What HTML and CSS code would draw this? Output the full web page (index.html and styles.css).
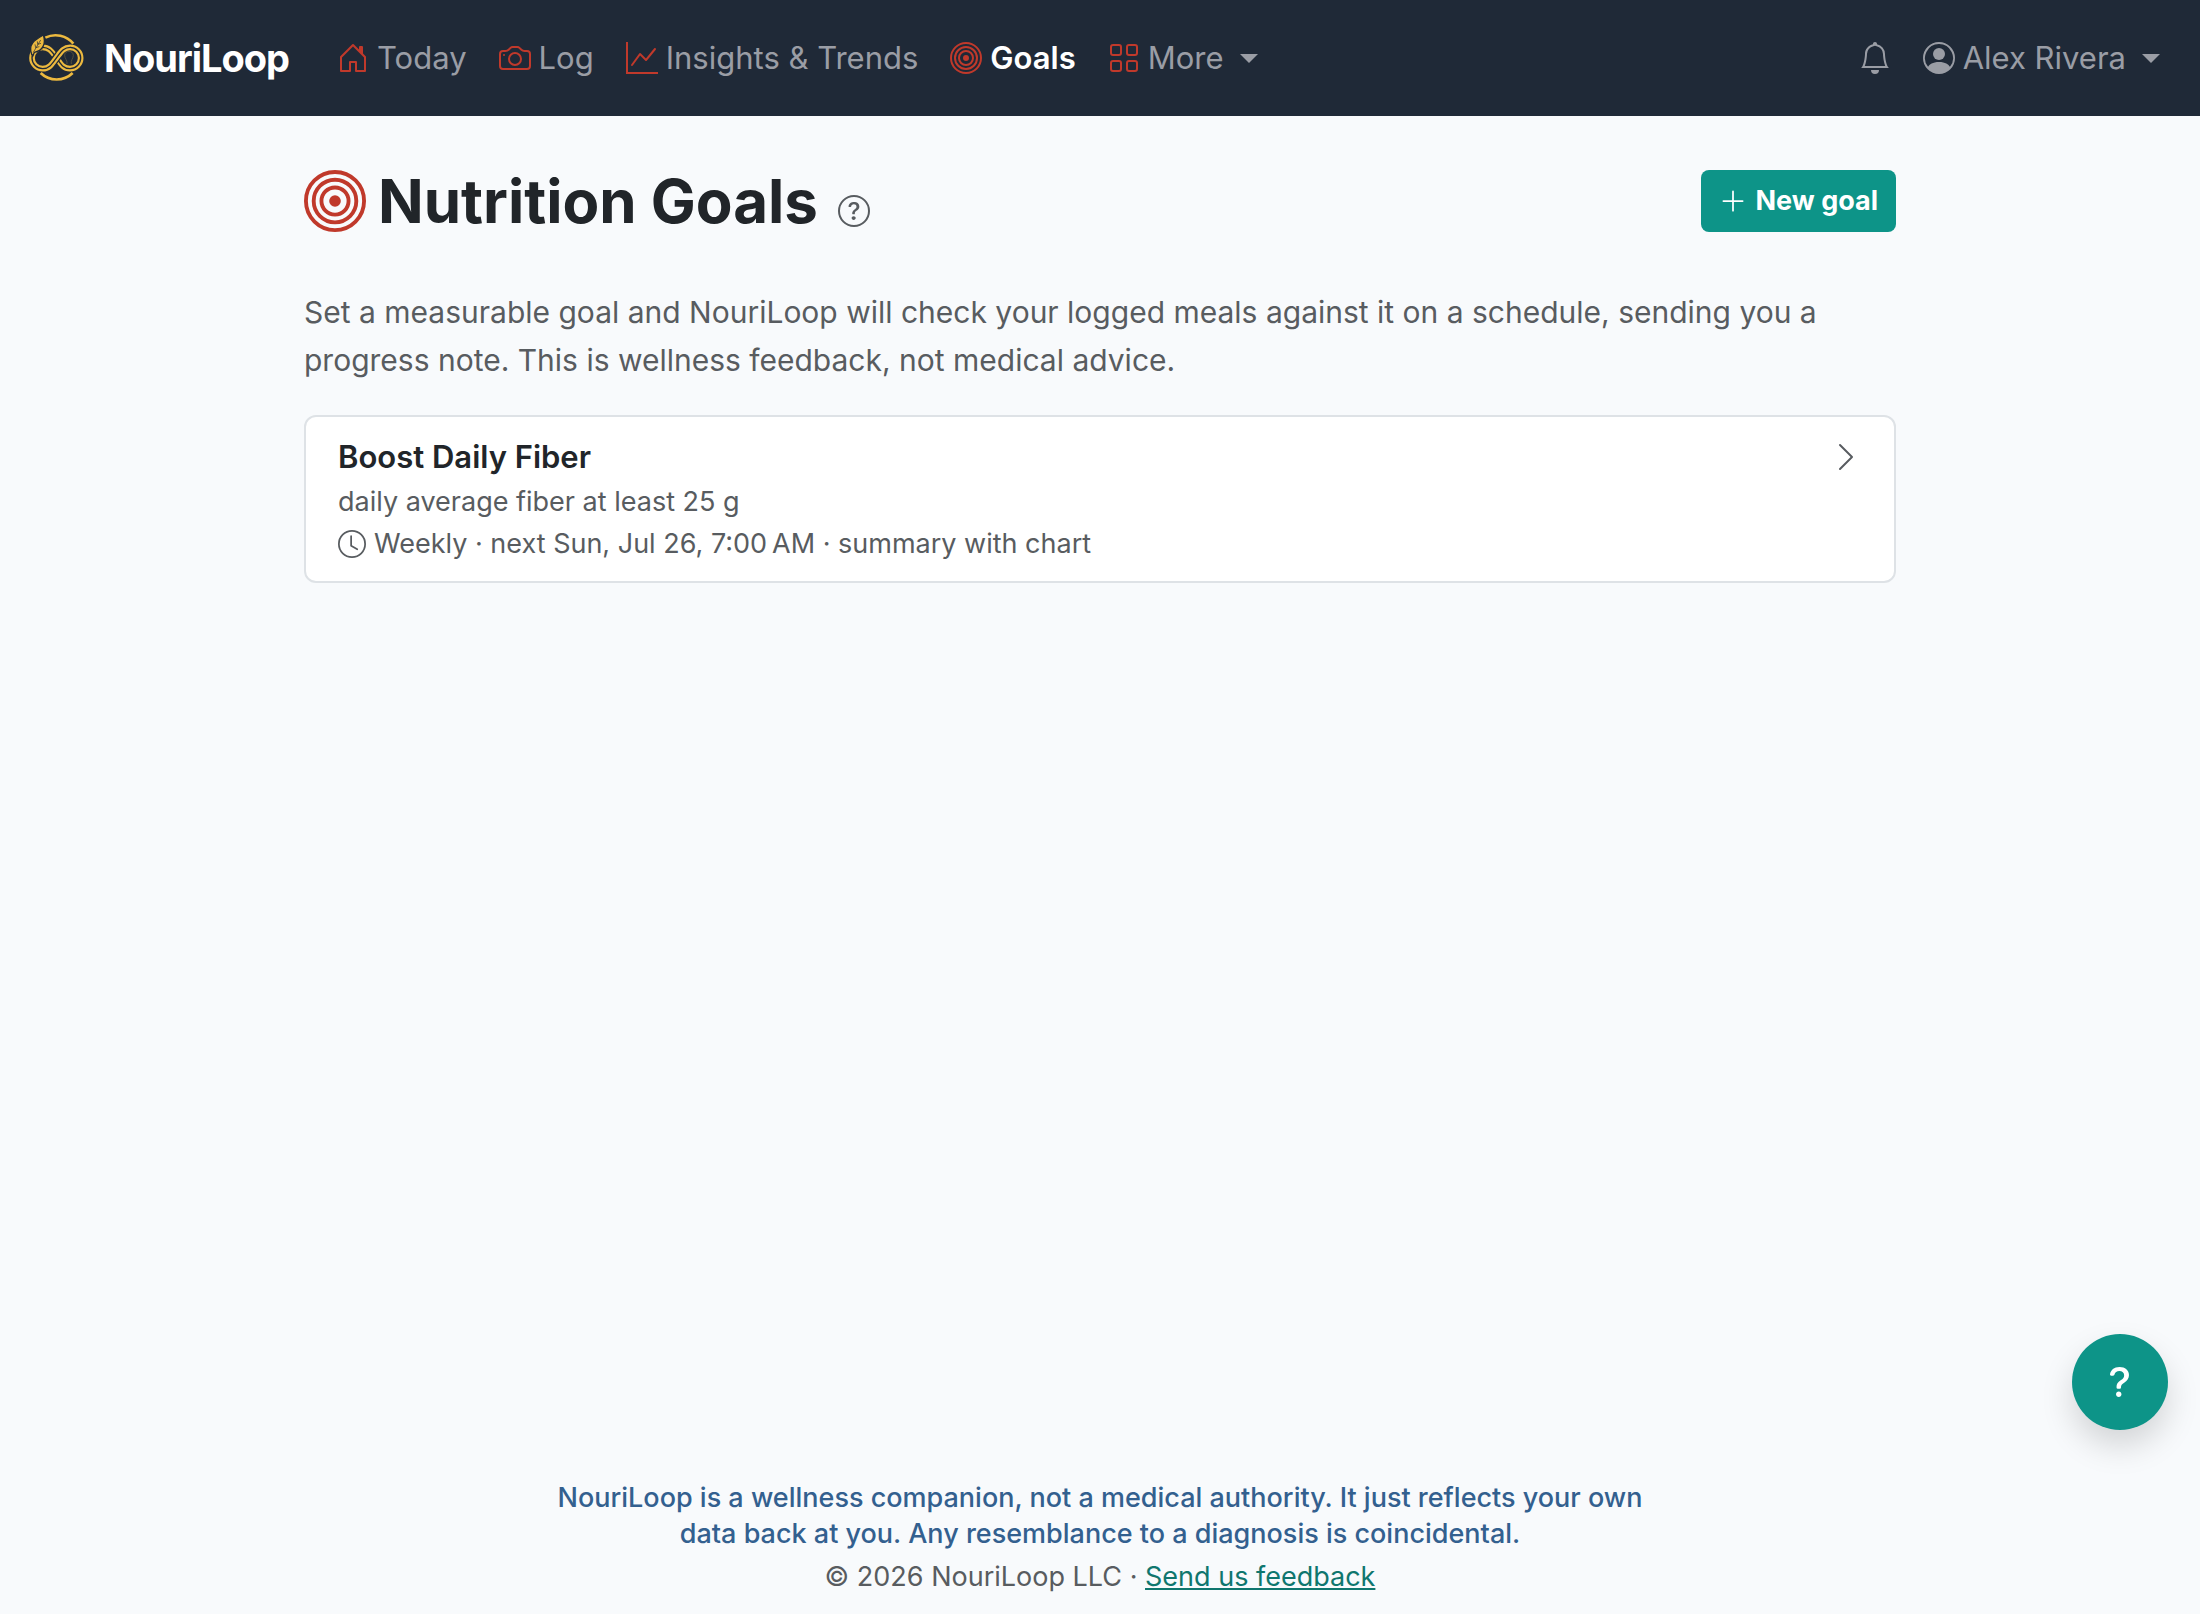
FILE: index.html
```html
<!DOCTYPE html>
<html lang="en">

<head>
    <meta charset="UTF-8">
    <meta name="viewport" content="width=device-width, initial-scale=1">
    <title>Nutrition Goals - NouriLoop</title>
    <link rel="stylesheet" href="styles.css">
</head>
<body>
    <!-- shared symbols -->
    <svg class="sprite" aria-hidden="true">
        <symbol id="bullseye" viewBox="0 0 16 16">
            <g fill="none" stroke="currentColor">
                <circle cx="8" cy="8" r="7.5"/>
                <circle cx="8" cy="8" r="5.5"/>
                <circle cx="8" cy="8" r="3.5"/>
            </g>
            <circle cx="8" cy="8" r="1.5"/>
        </symbol>
    </svg>

    <header class="navbar">
        <a class="brand" href="#">
            <svg class="logo" viewBox="24 31 168 168" fill="none" aria-hidden="true">
                <g class="gold" stroke-width="8">
                    <path d="M76 54A69 69 0 0 1 160 72"/>
                    <path d="M62 160A69 69 0 0 0 158 160"/>
                </g>
                <!-- strand that passes under -->
                <path class="gold" stroke-width="17" d="M68 83C89 83 97 98 110 115C123 134 130 147 150 147A32 32 0 0 0 150 83"/>
                <path class="dark" stroke-width="4" d="M68 83C89 83 97 98 110 115C123 134 130 147 150 147A32 32 0 0 0 150 83"/>
                <!-- strand on top -->
                <path class="dark" stroke-width="25" d="M88 139C97 130 104 121 112 111C118 103 124 96 130 91"/>
                <path class="gold" stroke-width="17" d="M68 83A32 32 0 0 0 68 147C90 147 98 130 112 111C124 95 132 83 150 83"/>
                <path class="dark" stroke-width="4" d="M68 83A32 32 0 0 0 68 147C90 147 98 130 112 111C124 95 132 83 151 83"/>
                <path class="face" stroke-width="2" d="M141 133C143 122 134 117 134 107C134 91 160 91 160 107C160 117 151 122 154 133"/>
                <!-- leaf -->
                <path class="leaf" stroke-width="4" d="M35 104C23 72 46 60 70 46C79 72 68 94 43 98L39 108Z"/>
                <path class="dark" stroke-width="2" d="M40 98L62 61M47 84L45 74M47 84L58 81M53 74L52 65M53 74L63 71"/>
            </svg>
            <span>NouriLoop</span>
        </a>
        <nav class="links">
            <a href="#">
                <svg class="icon red" viewBox="0 0 16 16"><path d="M8.354 1.146a.5.5 0 0 0-.708 0l-6 6A.5.5 0 0 0 1.5 7.5v7a.5.5 0 0 0 .5.5h4.5a.5.5 0 0 0 .5-.5v-4h2v4a.5.5 0 0 0 .5.5H14a.5.5 0 0 0 .5-.5v-7a.5.5 0 0 0-.146-.354L13 5.793V2.5a.5.5 0 0 0-.5-.5h-1a.5.5 0 0 0-.5.5v1.293zM2.5 14V7.707l5.5-5.5 5.5 5.5V14H10v-4a.5.5 0 0 0-.5-.5h-3a.5.5 0 0 0-.5.5v4z"/></svg>
                <span>Today</span>
            </a>
            <a href="#">
                <svg class="icon red" viewBox="0 0 16 16"><path d="M15 12a1 1 0 0 1-1 1H2a1 1 0 0 1-1-1V6a1 1 0 0 1 1-1h1.172a3 3 0 0 0 2.12-.879l.83-.828A1 1 0 0 1 6.827 3h2.344a1 1 0 0 1 .707.293l.828.828A3 3 0 0 0 12.828 5H14a1 1 0 0 1 1 1zM2 4a2 2 0 0 0-2 2v6a2 2 0 0 0 2 2h12a2 2 0 0 0 2-2V6a2 2 0 0 0-2-2h-1.172a2 2 0 0 1-1.414-.586l-.828-.828A2 2 0 0 0 9.172 2H6.828a2 2 0 0 0-1.414.586l-.828.828A2 2 0 0 1 3.172 4z"/><path d="M8 11a2.5 2.5 0 1 1 0-5 2.5 2.5 0 0 1 0 5m0 1a3.5 3.5 0 1 0 0-7 3.5 3.5 0 0 0 0 7M3 6.5a.5.5 0 1 1-1 0 .5.5 0 0 1 1 0"/></svg>
                <span>Log</span>
            </a>
            <a href="#">
                <svg class="icon red" viewBox="0 0 16 16"><path d="M0 0h1v15h15v1H0zm14.817 3.113a.5.5 0 0 1 .07.704l-4.5 5.5a.5.5 0 0 1-.74.037L7.06 6.767l-3.656 5.027a.5.5 0 0 1-.808-.588l4-5.5a.5.5 0 0 1 .758-.06l2.609 2.61 4.15-5.073a.5.5 0 0 1 .704-.07"/></svg>
                <span>Insights &amp; Trends</span>
            </a>
            <a href="#" class="active" aria-current="page">
                <svg class="icon red"><use href="#bullseye"/></svg>
                <span>Goals</span>
            </a>
            <button type="button" aria-haspopup="true">
                <svg class="icon red" viewBox="0 0 16 16" fill="none" stroke="currentColor"><rect x="1.5" y="1.5" width="5" height="5" rx="1"/><rect x="9.5" y="1.5" width="5" height="5" rx="1"/><rect x="1.5" y="9.5" width="5" height="5" rx="1"/><rect x="9.5" y="9.5" width="5" height="5" rx="1"/></svg>
                <span>More</span>
                <i class="caret"></i>
            </button>
        </nav>
        <div class="links account">
            <a href="#" aria-label="Notifications">
                <svg class="icon" viewBox="0 0 16 16"><path d="M8 16a2 2 0 0 0 2-2H6a2 2 0 0 0 2 2M8 1.918l-.797.161A4 4 0 0 0 4 6c0 .628-.134 2.197-.459 3.742-.16.767-.376 1.566-.663 2.258h10.244c-.287-.692-.502-1.49-.663-2.258C12.134 8.197 12 6.628 12 6a4 4 0 0 0-3.203-3.92zM14.22 12c.223.447.481.801.78 1H1c.299-.199.557-.553.78-1C2.68 10.2 3 6.88 3 6c0-2.42 1.72-4.44 4.005-4.901a1 1 0 1 1 1.99 0A5 5 0 0 1 13 6c0 .88.32 4.2 1.22 6"/></svg>
            </a>
            <button type="button" aria-haspopup="true">
                <svg class="icon" viewBox="0 0 16 16"><path d="M11 6a3 3 0 1 1-6 0 3 3 0 0 1 6 0"/><path fill-rule="evenodd" d="M0 8a8 8 0 1 1 16 0A8 8 0 0 1 0 8m8-7a7 7 0 0 0-5.468 11.37C3.242 11.226 4.805 10 8 10s4.757 1.225 5.468 2.37A7 7 0 0 0 8 1"/></svg>
                <span>Alex Rivera</span>
                <i class="caret"></i>
            </button>
        </div>
    </header>

    <main class="container">
        <div class="page-head">
            <h1>
                <svg class="icon-title red"><use href="#bullseye"/></svg>
                <span>Nutrition Goals</span>
            </h1>
            <button type="button" class="hint" aria-label="About goals">
                <svg class="icon" viewBox="0 0 16 16"><circle cx="8" cy="8" r="7.5" fill="none" stroke="currentColor"/><path d="M5.255 5.786a.237.237 0 0 0 .241.247h.825c.138 0 .248-.113.266-.25.09-.656.54-1.134 1.342-1.134.686 0 1.314.343 1.314 1.168 0 .635-.374.927-.965 1.371-.673.489-1.206 1.06-1.168 1.987l.003.217a.25.25 0 0 0 .25.246h.811a.25.25 0 0 0 .25-.25v-.105c0-.718.273-.927 1.01-1.486.609-.463 1.244-.977 1.244-2.056 0-1.511-1.276-2.241-2.673-2.241-1.267 0-2.655.59-2.75 2.286m1.557 5.763c0 .533.425.927 1.01.927.609 0 1.028-.394 1.028-.927 0-.552-.42-.94-1.029-.94-.584 0-1.009.388-1.009.94"/></svg>
            </button>
            <button type="button" class="btn">
                <svg class="icon-sm" viewBox="0 0 16 16"><path d="M8 2a.5.5 0 0 1 .5.5v5h5a.5.5 0 0 1 0 1h-5v5a.5.5 0 0 1-1 0v-5h-5a.5.5 0 0 1 0-1h5v-5A.5.5 0 0 1 8 2"/></svg>
                <span>New goal</span>
            </button>
        </div>
        <p class="lead">Set a measurable goal and NouriLoop will check your logged meals against it on a schedule, sending you a progress note. This is wellness feedback, not medical advice.</p>
        <a class="goal" href="#">
            <div class="goal-body">
                <h2>Boost Daily Fiber</h2>
                <p>daily average fiber at least 25 g</p>
                <p class="schedule">
                    <svg class="icon-sm" viewBox="0 0 16 16"><circle cx="8" cy="8" r="7.5" fill="none" stroke="currentColor"/><path d="M8 3.5a.5.5 0 0 0-1 0V9a.5.5 0 0 0 .252.434l3.5 2a.5.5 0 0 0 .496-.868L8 8.71z"/></svg>
                    <span>Weekly · next Sun, Jul 26, 7:00&#8239;AM · summary with chart</span>
                </p>
            </div>
            <svg class="icon" viewBox="0 0 16 16"><path d="M4.646 1.646a.5.5 0 0 1 .708 0l6 6a.5.5 0 0 1 0 .708l-6 6a.5.5 0 0 1-.708-.708L10.293 8 4.646 2.354a.5.5 0 0 1 0-.708"/></svg>
        </a>
    </main>

    <footer class="footer">
        <p class="note">NouriLoop is a wellness companion, not a medical authority. It just reflects your own data back at you. Any resemblance to a diagnosis is coincidental.</p>
        <p>© 2026 NouriLoop LLC · <a href="#">Send us feedback</a></p>
    </footer>

    <button type="button" class="help" aria-label="Help">
        <svg viewBox="0 0 16 16"><path d="M4.475 5.458c-.284 0-.514-.237-.47-.517C4.28 3.24 5.576 2 7.825 2c2.25 0 3.767 1.36 3.767 3.215 0 1.344-.665 2.288-1.79 2.973-1.1.659-1.414 1.118-1.414 2.01v.03a.5.5 0 0 1-.5.5h-.77a.5.5 0 0 1-.5-.495l-.003-.2c-.043-1.221.477-2.001 1.645-2.712 1.03-.632 1.397-1.135 1.397-2.028 0-.979-.758-1.698-1.926-1.698-1.009 0-1.71.529-1.938 1.402-.066.254-.278.461-.54.461h-.777ZM7.496 14c.622 0 1.095-.474 1.095-1.09 0-.618-.473-1.092-1.095-1.092-.606 0-1.087.474-1.087 1.091S6.89 14 7.496 14"/></svg>
    </button>
</body>
</html>
```

FILE: styles.css
```css
* {
    box-sizing: border-box;
    margin: 0;
    padding: 0;
}
body {
    display: flex;
    flex-direction: column;
    min-height: 100vh;
    background-color: #f8fafc;
    color: #212529;
    font-family: Inter, "Liberation Sans", sans-serif;
    font-size: 31px;
    line-height: 48px;
}
a {
    color: inherit;
    text-decoration: none;
}
button {
    border: 0;
    background: none;
    color: inherit;
    font: inherit;
    cursor: pointer;
}
svg {
    flex: none;
    fill: currentColor;
}
svg[fill="none"] {
    fill: none;
}
.sprite {
    position: absolute;
    width: 0;
    height: 0;
}
.icon {
    width: 32px;
    height: 32px;
}
.icon-sm {
    width: 28px;
    height: 28px;
}
.red {
    color: #c0392b;
}

/* navbar */
.navbar {
    display: flex;
    align-items: center;
    height: 116px;
    padding: 0 24px 0 28px;
    background-color: #1f2937;
    color: #9a9da5;
}
.brand {
    display: flex;
    align-items: center;
    gap: 20px;
    margin-right: 32px;
    color: #fff;
    font-size: 38px;
    font-weight: 700;
    letter-spacing: -1px;
}
.logo {
    width: 56px;
    height: 56px;
}
.logo .gold {
    stroke: #ecb93f;
}
.logo .dark {
    stroke: #1f2937;
}
.logo .face {
    stroke: #6d6240;
}
.logo .leaf {
    fill: #ecb93f;
    stroke: #1f2937;
}
.links {
    display: flex;
    align-items: center;
}
.links a,
.links button {
    display: flex;
    align-items: center;
    gap: 8px;
    padding: 16px;
}
.links .active {
    color: #fff;
    font-weight: 600;
}
.account {
    margin-left: auto;
}
.caret {
    margin-left: 8px;
    border: 9px solid transparent;
    border-top-color: currentColor;
    border-bottom: 0;
}

/* content */
.container {
    flex: 1;
    width: 100%;
    max-width: 1640px;
    margin: 0 auto;
    padding: 48px 24px;
}
.page-head {
    display: flex;
    align-items: center;
    margin-bottom: 50px;
}
.page-head h1 {
    display: flex;
    align-items: center;
    gap: 12px;
    font-size: 60px;
    font-weight: 700;
    line-height: 74px;
}
.icon-title {
    width: 62px;
    height: 62px;
}
.hint {
    display: flex;
    margin: 20px 0 0 20px;
    color: #585c60;
}
.btn {
    display: flex;
    align-items: center;
    gap: 8px;
    height: 62px;
    margin-left: auto;
    padding: 0 18px;
    border-radius: 8px;
    background-color: #0d9488;
    color: #fff;
    font-size: 27px;
    font-weight: 700;
}
.lead {
    margin-bottom: 31px;
    color: #585c60;
    font-size: 30px;
}
.goal {
    display: flex;
    justify-content: space-between;
    padding: 16px 32px;
    border: 2px solid #dee2e6;
    border-radius: 12px;
    background-color: #fff;
    color: #585c60;
    font-size: 27px;
    line-height: 42px;
}
.goal h2 {
    color: #212529;
    font-size: 31px;
    font-weight: 600;
    line-height: 48px;
}
.goal .icon {
    margin-top: 8px;
}
.schedule {
    display: flex;
    align-items: center;
    gap: 8px;
}

/* footer */
.footer {
    padding: 0 24px 16px;
    color: #585c60;
    font-size: 27px;
    line-height: 42px;
    text-align: center;
}
.footer .note {
    max-width: 1140px;
    margin: 0 auto 4px;
    color: #33608f;
    font-weight: 500;
    line-height: 36px;
}
.footer a {
    color: #0f766e;
    text-decoration: underline;
}

/* floating help button */
.help {
    position: fixed;
    right: 32px;
    bottom: 184px;
    display: flex;
    align-items: center;
    justify-content: center;
    width: 96px;
    height: 96px;
    border-radius: 50%;
    background-color: #0d9488;
    color: #fff;
    box-shadow: 0 16px 32px rgba(0, 0, 0, .15);
}
.help svg {
    width: 40px;
    height: 40px;
}
```
